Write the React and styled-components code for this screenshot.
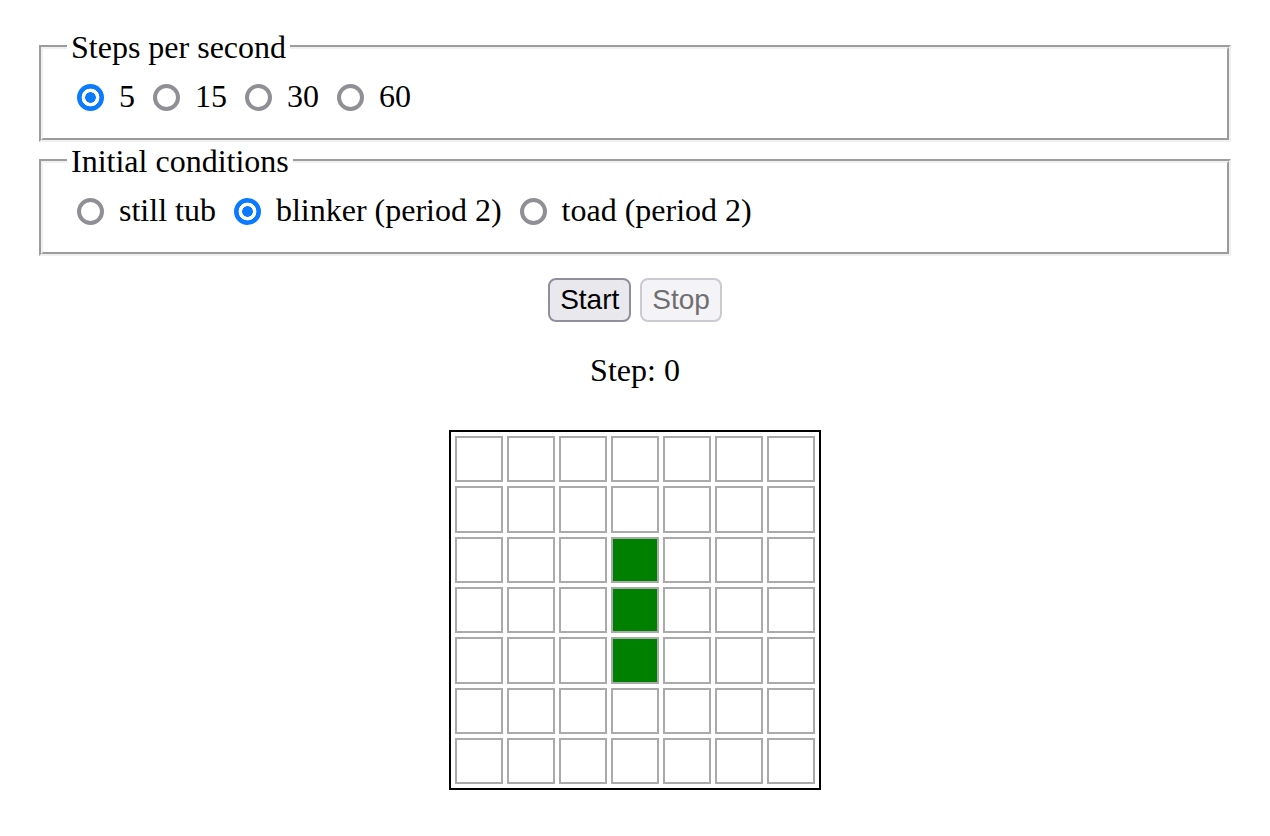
import React, { useState } from 'react'
import styled, { createGlobalStyle, css } from 'styled-components'

const GlobalStyle = createGlobalStyle`
  html, body {
    margin: 0;
    padding: 0;
    background: #fff;
  }
  body {
    font-family: "Liberation Serif", "Times New Roman", serif;
    color: #000;
  }
`

const Page = styled.div`
  padding: 29px 39px 0;
  display: flex;
  flex-direction: column;
  align-items: stretch;
`

const Fieldset = styled.fieldset`
  margin: 0 0 1px;
  padding: 0 24px 22px;
  border: 4px groove #f0f0f0;
  min-width: 0;
`

const Legend = styled.legend`
  padding: 0 4px;
  font-size: 32px;
  line-height: 36px;
`

const Options = styled.div`
  display: flex;
  align-items: center;
  height: 40px;
  margin-top: 11px;
  font-size: 32px;
  line-height: 36px;
`

const Option = styled.label`
  display: flex;
  align-items: center;
  margin-right: 8px;
  cursor: pointer;
`

const Radio = styled.input.attrs({ type: 'radio' })`
  appearance: none;
  -webkit-appearance: none;
  box-sizing: border-box;
  width: 27px;
  height: 27px;
  margin: 2px 15px 0 10px;
  border-radius: 50%;
  border: 4px solid #8f8f95;
  background: #fff;
  flex: none;

  &:checked {
    border: none;
    background: radial-gradient(circle, #0a7aff 0 5px, #fff 5.6px 8.6px, #0a7aff 9.2px);
  }
`

const Controls = styled.div`
  display: flex;
  justify-content: center;
  gap: 9px;
  margin-top: 21px;
`

const Button = styled.button`
  box-sizing: border-box;
  height: 44px;
  padding: 0 10px;
  border-radius: 8px;
  font-family: "Liberation Sans", Arial, sans-serif;
  font-size: 28px;
  line-height: 1;
  border: 2px solid #918f9d;
  background: #e9e8ed;
  color: #000;

  ${p => p.disabled && css`
    border-color: #cbcad0;
    background: #f4f3f6;
    color: #6f6f72;
  `}
`

const StepCount = styled.div`
  margin-top: 30px;
  text-align: center;
  font-size: 32px;
  line-height: 37px;
`

const Board = styled.div`
  align-self: center;
  margin-top: 41px;
  display: grid;
  grid-template-columns: repeat(7, 48px);
  grid-auto-rows: 46.33px;
  gap: 4px;
  padding: 4px;
  border: 2px solid #000;
`

const Cell = styled.div`
  box-sizing: border-box;
  border: 2px solid #aaa;
  background: ${p => (p.alive ? '#008000' : '#fff')};
`

const speeds = [5, 15, 30, 60]
const patterns = ['still tub', 'blinker (period 2)', 'toad (period 2)']

const blinker = [
  '.......',
  '.......',
  '...#...',
  '...#...',
  '...#...',
  '.......',
  '.......',
]

export default function App() {
  const [speed, setSpeed] = useState(5)
  const [pattern, setPattern] = useState('blinker (period 2)')

  return (
    <Page>
      <GlobalStyle />
      <Fieldset>
        <Legend>Steps per second</Legend>
        <Options>
          {speeds.map(s => (
            <Option key={s}>
              <Radio name="speed" checked={speed === s} onChange={() => setSpeed(s)} />
              {s}
            </Option>
          ))}
        </Options>
      </Fieldset>
      <Fieldset>
        <Legend>Initial conditions</Legend>
        <Options>
          {patterns.map(p => (
            <Option key={p}>
              <Radio name="pattern" checked={pattern === p} onChange={() => setPattern(p)} />
              {p}
            </Option>
          ))}
        </Options>
      </Fieldset>
      <Controls>
        <Button>Start</Button>
        <Button disabled>Stop</Button>
      </Controls>
      <StepCount>Step: 0</StepCount>
      <Board>
        {blinker.map((row, r) =>
          row.split('').map((c, i) => <Cell key={r + '-' + i} alive={c === '#'} />)
        )}
      </Board>
    </Page>
  )
}
